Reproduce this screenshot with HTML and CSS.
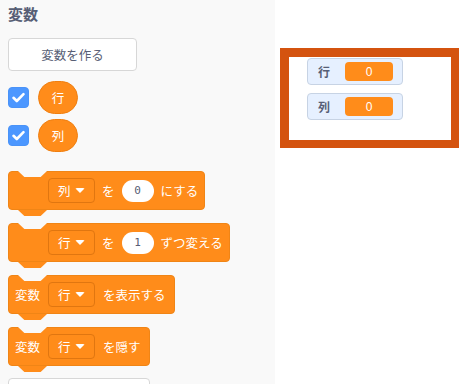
FILE: index.html
```html
<!DOCTYPE html>
<html lang="ja">
<head>
<meta charset="utf-8">
<link rel="stylesheet" href="styles.css">
</head>
<body>
<div class="app">
  <div class="palette">
    <div class="title">変数</div>
    <div class="make-btn">変数を作る</div>
    <div class="var-row">
      <span class="check"><svg width="21" height="21" viewBox="0 0 21 21"><path d="M5.5 10.8 L8.8 14 L15.5 7.2" fill="none" stroke="#fff" stroke-width="2.6" stroke-linecap="round" stroke-linejoin="round"/></svg></span>
      <span class="reporter">行</span>
    </div>
    <div class="var-row">
      <span class="check"><svg width="21" height="21" viewBox="0 0 21 21"><path d="M5.5 10.8 L8.8 14 L15.5 7.2" fill="none" stroke="#fff" stroke-width="2.6" stroke-linecap="round" stroke-linejoin="round"/></svg></span>
      <span class="reporter">列</span>
    </div>
    <div class="blocks">
      <div class="block pad-wide">
        <span class="dropdown">列<span class="arrow"></span></span>
        <span class="txt">を</span>
        <span class="num">0</span>
        <span class="txt">にする</span>
      </div>
      <div class="block pad-wide">
        <span class="dropdown">行<span class="arrow"></span></span>
        <span class="txt">を</span>
        <span class="num">1</span>
        <span class="txt">ずつ変える</span>
      </div>
      <div class="block">
        <span class="txt">変数</span>
        <span class="dropdown">行<span class="arrow"></span></span>
        <span class="txt">を表示する</span>
      </div>
      <div class="block">
        <span class="txt">変数</span>
        <span class="dropdown">行<span class="arrow"></span></span>
        <span class="txt">を隠す</span>
      </div>
    </div>
    <div class="make-btn list-btn">リストを作る</div>
  </div>
  <div class="stage">
    <div class="stage-box">
      <div class="monitor"><span class="mon-label">行</span><span class="mon-value">0</span></div>
      <div class="monitor"><span class="mon-label">列</span><span class="mon-value">0</span></div>
    </div>
  </div>
</div>
</body>
</html>
```

FILE: styles.css
```css
html, body {
  margin: 0;
  padding: 0;
  background: #ffffff;
}
body {
  font-family: "Noto Sans CJK JP", "Noto Sans", sans-serif;
  color: #575e75;
}
.app {
  display: flex;
  width: 466px;
  height: 384px;
  overflow: hidden;
}
.palette {
  width: 275px;
  flex: none;
  height: 384px;
  box-sizing: border-box;
  background: #f9f9f9;
  padding: 4px 8px 0;
  overflow: hidden;
  display: flex;
  flex-direction: column;
  align-items: flex-start;
}
.title {
  font-size: 15px;
  font-weight: bold;
  line-height: 20px;
  height: 20px;
}
.make-btn {
  margin-top: 14px;
  width: 129px;
  height: 33px;
  box-sizing: border-box;
  border: 1px solid #d7d7d7;
  border-radius: 4px;
  background: #ffffff;
  display: flex;
  align-items: center;
  justify-content: center;
  font-size: 12.5px;
  color: #575e75;
  flex: none;
}
.var-row {
  margin-top: 10px;
  display: flex;
  align-items: center;
  gap: 9px;
  height: 33px;
  flex: none;
}
.var-row + .var-row {
  margin-top: 5px;
}
.check {
  width: 21px;
  height: 21px;
  border-radius: 4px;
  background: #4c97ff;
  box-sizing: border-box;
  border: 1px solid #4a93f8;
  display: flex;
  align-items: center;
  justify-content: center;
}
.check svg {
  display: block;
  margin: -1px;
}
.reporter {
  width: 40px;
  height: 33px;
  border-radius: 17px;
  background: #ff8c1a;
  box-sizing: border-box;
  border: 1px solid #f07f10;
  color: #ffffff;
  font-size: 12.5px;
  display: flex;
  align-items: center;
  justify-content: center;
}
.blocks {
  margin-top: 19px;
  display: flex;
  flex-direction: column;
  align-items: flex-start;
  gap: 13px;
}
.block {
  position: relative;
  height: 39px;
  box-sizing: border-box;
  background: #ff8c1a;
  border: 1px solid #f08516;
  border-radius: 4px;
  display: flex;
  align-items: center;
  gap: 8px;
  padding: 0 8px 0 6px;
  color: #ffffff;
  font-size: 12.5px;
}
.block.pad-wide {
  padding-left: 39px;
  padding-right: 6px;
  gap: 7px;
}
.block::before {
  content: "";
  position: absolute;
  top: -1px;
  left: 9px;
  width: 29px;
  height: 6px;
  background: #f9f9f9;
  clip-path: polygon(0 0, 100% 0, 78% 100%, 22% 100%);
}
.block::after {
  content: "";
  position: absolute;
  bottom: -7px;
  left: 9px;
  width: 29px;
  height: 6px;
  background: #ff8c1a;
  clip-path: polygon(0 0, 100% 0, 78% 100%, 22% 100%);
}
.txt {
  white-space: nowrap;
}
.dropdown {
  width: 47px;
  height: 25px;
  box-sizing: border-box;
  border: 1px solid #e07610;
  border-radius: 4px;
  background: #ff8c1a;
  display: flex;
  align-items: center;
  justify-content: space-between;
  padding: 0 9px 0 9px;
}
.arrow {
  width: 0;
  height: 0;
  border-left: 5px solid transparent;
  border-right: 5px solid transparent;
  border-top: 5px solid #ffffff;
  border-radius: 2px;
}
.num {
  width: 32px;
  height: 22px;
  border-radius: 11px;
  background: #ffffff;
  color: #575e75;
  font-family: "DejaVu Sans Mono", monospace;
  font-size: 11px;
  display: flex;
  align-items: center;
  justify-content: center;
}
.list-btn {
  margin-top: 12px;
  width: 142px;
}
.stage {
  flex: 1;
  background: #ffffff;
  padding: 48px 0 0 5px;
}
.stage-box {
  width: 179px;
  height: 100px;
  box-sizing: border-box;
  border: 9px solid #d4530f;
  border-right-width: 8px;
  border-bottom-width: 8px;
  padding: 1px 0 0 18px;
  display: flex;
  flex-direction: column;
  align-items: flex-start;
  gap: 8px;
}
.monitor {
  width: 96px;
  height: 27px;
  box-sizing: border-box;
  background: #e6f0ff;
  border: 1px solid #c7d3e4;
  border-radius: 4px;
  display: flex;
  align-items: center;
  justify-content: space-between;
  padding: 0 9px 0 10px;
}
.mon-label {
  font-size: 12px;
  font-weight: bold;
  color: #575e75;
}
.mon-value {
  width: 48px;
  height: 19px;
  border-radius: 4px;
  background: #ff8c1a;
  color: #ffffff;
  font-family: "Liberation Sans", sans-serif;
  font-size: 12px;
  display: flex;
  align-items: center;
  justify-content: center;
}
```
